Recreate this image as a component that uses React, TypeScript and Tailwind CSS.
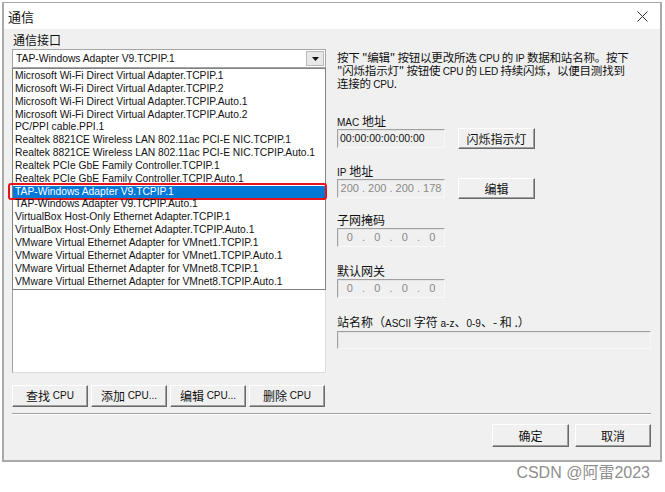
import React from "react";

const items = [
  "Microsoft Wi-Fi Direct Virtual Adapter.TCPIP.1",
  "Microsoft Wi-Fi Direct Virtual Adapter.TCPIP.2",
  "Microsoft Wi-Fi Direct Virtual Adapter.TCPIP.Auto.1",
  "Microsoft Wi-Fi Direct Virtual Adapter.TCPIP.Auto.2",
  "PC/PPI cable.PPI.1",
  "Realtek 8821CE Wireless LAN 802.11ac PCI-E NIC.TCPIP.1",
  "Realtek 8821CE Wireless LAN 802.11ac PCI-E NIC.TCPIP.Auto.1",
  "Realtek PCIe GbE Family Controller.TCPIP.1",
  "Realtek PCIe GbE Family Controller.TCPIP.Auto.1",
  "TAP-Windows Adapter V9.TCPIP.1",
  "TAP-Windows Adapter V9.TCPIP.Auto.1",
  "VirtualBox Host-Only Ethernet Adapter.TCPIP.1",
  "VirtualBox Host-Only Ethernet Adapter.TCPIP.Auto.1",
  "VMware Virtual Ethernet Adapter for VMnet1.TCPIP.1",
  "VMware Virtual Ethernet Adapter for VMnet1.TCPIP.Auto.1",
  "VMware Virtual Ethernet Adapter for VMnet8.TCPIP.1",
  "VMware Virtual Ethernet Adapter for VMnet8.TCPIP.Auto.1",
];

const cjk = "font-['Noto_Sans_CJK_SC',sans-serif]";
const latin = "font-['Liberation_Sans','Noto_Sans_CJK_SC',sans-serif]";

const btn =
  "flex items-center justify-center bg-[#f0f0f0] border border-t-white border-l-white border-r-[#696969] border-b-[#696969] shadow-[inset_-1px_-1px_0_#a0a0a0] text-[12px] leading-none text-[#111]";

const sunken =
  "border border-t-[#a0a0a0] border-l-[#a0a0a0] border-r-[#f8f8f8] border-b-[#f8f8f8] shadow-[inset_1px_1px_0_#e3e3e3] bg-[#f0f0f0]";

function L({ children }: { children: React.ReactNode }) {
  return <span className={`${latin} text-[10px]`}>{children}</span>;
}

function IpField({ parts }: { parts: string[] }) {
  return (
    <div className={`${sunken} w-[108px] h-[19px] flex items-center ${latin} text-[11px] text-[#8a8a8a]`}>
      {parts.map((p, i) => (
        <React.Fragment key={i}>
          <span className="flex-1 text-center">{p}</span>
          {i < parts.length - 1 && <span className="w-[4px] text-center">.</span>}
        </React.Fragment>
      ))}
    </div>
  );
}

export default function App() {
  return (
    <div className={`w-[665px] h-[492px] bg-white pt-[2px] pl-[2px] ${cjk} text-[#111]`}>
      <div className="w-[660px] h-[460px] border-t border-l-2 border-r-2 border-b-2 border-[#a9a9a9] bg-[#f0f0f0] flex flex-col">
        {/* title bar */}
        <div className="h-[26px] bg-white flex items-center justify-between pl-[4px] pr-[12px] shrink-0">
          <span className="text-[13px] leading-none">通信</span>
          <svg width="11" height="11" viewBox="0 0 11 11">
            <path d="M0.5 0.5 L10.5 10.5 M10.5 0.5 L0.5 10.5" stroke="#333" strokeWidth="1" />
          </svg>
        </div>

        {/* body */}
        <div className="flex-1 flex flex-col pl-[8px] pr-[9px]">
          <div className="flex">
            {/* left column */}
            <div className="w-[314px] flex flex-col pt-[4px]">
              <div className="h-[16px] text-[12px] leading-[14px] pl-[1px]">通信接口</div>
              <div className="h-[19px] bg-white border border-[#a5a5a5] flex items-center relative">
                <span className={`${latin} text-[10.3px] pl-[3px] flex-1`}>TAP-Windows Adapter V9.TCPIP.1</span>
                <div className="w-[18px] h-[15px] mr-[1px] bg-[#e8e8e8] border border-[#b8b8b8] flex items-center justify-center">
                  <svg width="7" height="4" viewBox="0 0 7 4">
                    <path d="M0 0 L7 0 L3.5 4 Z" fill="#111" />
                  </svg>
                </div>
              </div>
              <div className="relative h-[305px]">
                <div className="absolute inset-0 bg-white border border-[#a0a0a0] border-r-[#dcdcdc] border-b-[#dcdcdc]" />
                <div className="absolute top-0 left-0 right-0 bg-white border border-[#828282] pt-[1px] pb-[1px]">
                  {items.map((t, i) => {
                    const sel = i === 9;
                    return (
                      <div
                        key={t}
                        className={`relative h-[12.85px] leading-[12.85px] pl-[2px] ${latin} text-[10.3px] whitespace-nowrap ${
                          sel ? "bg-[#0078d7] text-white" : "text-[#111]"
                        }`}
                      >
                        {t}
                        {sel && (
                          <div className="absolute left-[-5px] right-[-2px] top-[-3px] bottom-[-2px] border-2 border-[#e8141c] rounded-[3px]" />
                        )}
                      </div>
                    );
                  })}
                </div>
              </div>
              <div className="flex gap-[3px] mt-[12px]">
                <div className={`${btn} w-[76px] h-[22px]`}>查找&nbsp;<L>CPU</L></div>
                <div className={`${btn} w-[76px] h-[22px]`}>添加&nbsp;<L>CPU...</L></div>
                <div className={`${btn} w-[76px] h-[22px]`}>编辑&nbsp;<L>CPU...</L></div>
                <div className={`${btn} w-[76px] h-[22px]`}>删除&nbsp;<L>CPU</L></div>
              </div>
            </div>

            {/* right column */}
            <div className="flex-1 flex flex-col pl-[11px] pt-[22px]">
              <div className="text-[11.5px] leading-[13px] whitespace-nowrap tracking-[-0.2px]">
                <div className="h-[13px]">按下 "编辑" 按钮以更改所选 <L>CPU</L> 的 <L>IP</L> 数据和站名称。按下</div>
                <div className="h-[13px]">"闪烁指示灯" 按钮使 <L>CPU</L> 的 <L>LED</L> 持续闪烁，以便目测找到</div>
                <div className="h-[13px]">连接的 <L>CPU</L>.</div>
              </div>

              <div className="mt-[24px] text-[12px] leading-[14px] h-[14px]"><L>MAC</L> 地址</div>
              <div className="flex items-center gap-[13px]">
                <div className={`${sunken} w-[108px] h-[19px] flex items-center pl-[2px] ${latin} text-[10.5px] text-[#111]`}>
                  00:00:00:00:00:00
                </div>
                <div className={`${btn} w-[77px] h-[21px]`}>闪烁指示灯</div>
              </div>

              <div className="mt-[15px] text-[12px] leading-[14px] h-[14px]"><L>IP</L> 地址</div>
              <div className="flex items-center gap-[13px]">
                <IpField parts={["200", "200", "200", "178"]} />
                <div className={`${btn} w-[77px] h-[21px]`}>编辑</div>
              </div>

              <div className="mt-[14px] text-[12px] leading-[14px] h-[14px]">子网掩码</div>
              <div className="mt-[1px]">
                <IpField parts={["0", "0", "0", "0"]} />
              </div>

              <div className="mt-[17px] text-[12px] leading-[14px] h-[14px]">默认网关</div>
              <div className="mt-[1px]">
                <IpField parts={["0", "0", "0", "0"]} />
              </div>

              <div className="mt-[17px] text-[12px] leading-[14px] h-[14px]">
                站名称（<L>ASCII</L> 字符 <L>a-z</L>、<L>0-9</L>、- 和 .）
              </div>
              <div className={`${sunken} mt-[2px] h-[18px] w-full`} />
            </div>
          </div>

          {/* separator */}
          <div className="mt-[6px] border-t border-[#a0a0a0] border-b border-b-white" />

          {/* bottom buttons */}
          <div className="flex justify-end gap-[6px] mt-[9px]">
            <div className={`${btn} w-[77px] h-[23px] border-l-[#8a8a8a] border-t-[#d8d8d8]`}>确定</div>
            <div className={`${btn} w-[76px] h-[23px]`}>取消</div>
          </div>
        </div>
      </div>
      <div className="flex justify-end pr-[15px] mt-[1px]">
        <span className="font-['Liberation_Sans','Noto_Sans_CJK_SC',sans-serif] text-[16px] leading-[20px] text-[#8e8e8e]">
          CSDN @阿雷2023
        </span>
      </div>
    </div>
  );
}
